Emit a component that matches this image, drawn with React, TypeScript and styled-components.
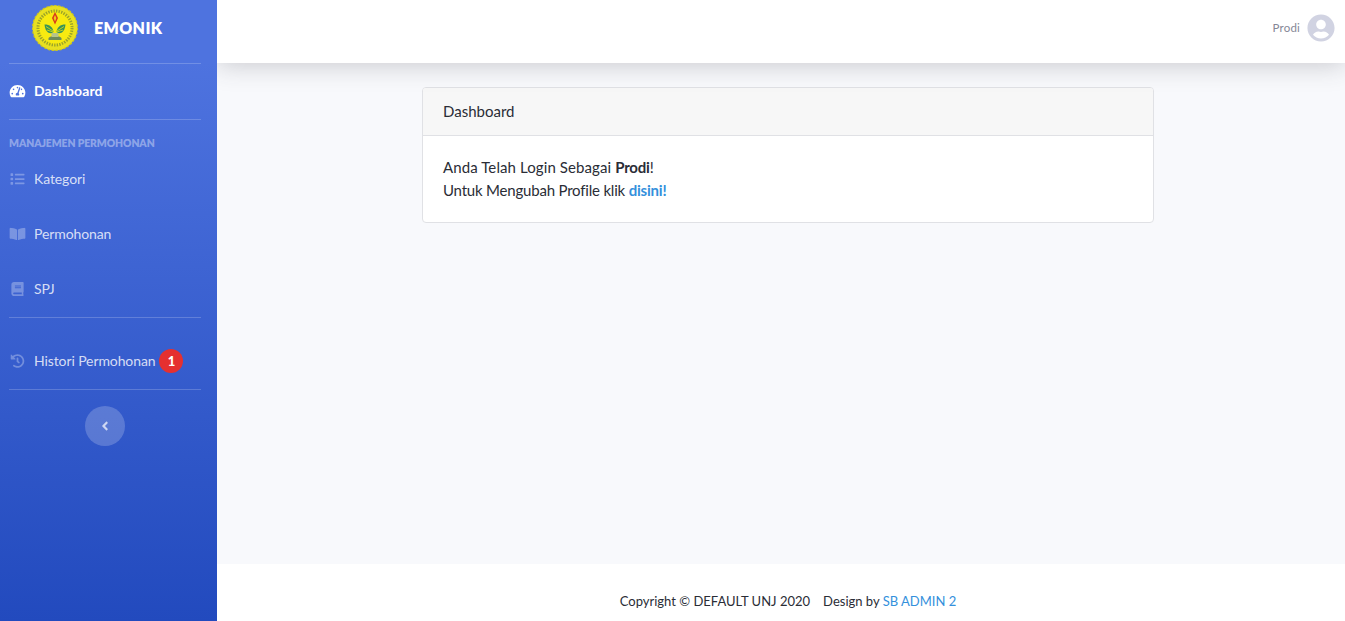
import React from "react";
import styled, { createGlobalStyle } from "styled-components";
import { FaTachometerAlt, FaList, FaBookOpen, FaBook, FaHistory, FaUserCircle, FaAngleLeft } from "react-icons/fa";

const Global = createGlobalStyle`
  html, body { margin: 0; padding: 0; height: 100%; overflow: hidden; }
  body { font-family: Lato, "Noto Sans", sans-serif; background: #f8f9fc; color: #212529; }
  * { box-sizing: border-box; }
`;

const Page = styled.div`
  display: flex;
  height: 621px;
  width: 1345px;
`;

const Sidebar = styled.aside`
  width: 217px;
  flex: none;
  padding: 0 16px 0 9px;
  background: linear-gradient(180deg, #4e73df 10%, #224abe 100%);
  display: flex;
  flex-direction: column;
  position: relative;
  z-index: 2;
`;

const Brand = styled.div`
  height: 63px;
  display: flex;
  align-items: center;
  padding: 0 0 7px 23px;
  gap: 16px;
`;

const BrandName = styled.span`
  color: #fff;
  font-weight: 800;
  font-size: 16px;
  letter-spacing: 0.35px;
  margin-bottom: 2px;
`;

const Divider = styled.hr`
  border: 0;
  margin: 0;
  height: 1px;
  flex: none;
  background: rgba(255, 255, 255, 0.2);
`;

const Item = styled.div<{ $h: number; $active?: boolean; $top?: number }>`
  height: ${(p) => p.$h}px;
  padding: ${(p) => p.$top ?? 0}px 0 2px;
  display: flex;
  align-items: center;
  font-size: 14px;
  font-weight: ${(p) => (p.$active ? 700 : 400)};
  color: ${(p) => (p.$active ? "#fff" : "rgba(255,255,255,0.8)")};
  letter-spacing: ${(p) => (p.$active ? 0.1 : -0.1)}px;
  & > svg {
    width: 17px;
    height: 14px;
    margin-right: 8px;
    flex: none;
    color: ${(p) => (p.$active ? "#fff" : "rgba(255,255,255,0.3)")};
  }
`;

const Heading = styled.div`
  height: 32px;
  padding-top: 16px;
  line-height: 14px;
  font-size: 10.4px;
  font-weight: 800;
  letter-spacing: -0.1px;
  color: rgba(255, 255, 255, 0.4);
  text-transform: uppercase;
  white-space: nowrap;
`;

const Badge = styled.span`
  width: 24px;
  height: 24px;
  margin-left: 4px;
  border-radius: 50%;
  background: #e53030;
  color: #fff;
  font-size: 13px;
  font-weight: 900;
  display: flex;
  align-items: center;
  justify-content: center;
`;

const ToggleWrap = styled.div`
  display: flex;
  justify-content: center;
  padding-top: 16px;
`;

const Toggle = styled.button`
  width: 40px;
  height: 40px;
  border: 0;
  padding: 0;
  border-radius: 50%;
  background: rgba(255, 255, 255, 0.2);
  color: rgba(255, 255, 255, 0.7);
  display: flex;
  align-items: center;
  justify-content: center;
`;

const Main = styled.div`
  flex: 1;
  display: flex;
  flex-direction: column;
  min-width: 0;
`;

const Topbar = styled.header`
  height: 63px;
  flex: none;
  background: #fff;
  box-shadow: 0 2px 26px 0 rgba(58, 59, 69, 0.25);
  display: flex;
  align-items: center;
  justify-content: flex-end;
  padding: 0 10px 7px 0;
  gap: 7px;
  position: relative;
`;

const UserName = styled.span`
  font-size: 11.5px;
  color: #858796;
  letter-spacing: 0.2px;
  margin-bottom: 1px;
`;

const Content = styled.main`
  flex: 1;
  display: flex;
  justify-content: center;
  align-items: flex-start;
  padding: 24px 0 0 14px;
`;

const Card = styled.section`
  width: 732px;
  height: 136px;
  background: #fff;
  border: 1px solid #e0e1e5;
  border-radius: 4px;
  overflow: hidden;
`;

const CardHeader = styled.div`
  height: 48px;
  padding: 0 0 2px 20px;
  display: flex;
  align-items: center;
  background: #f7f7f7;
  border-bottom: 1px solid #e0e1e5;
  font-size: 15px;
  color: #2a2d36;
`;

const CardBody = styled.div`
  padding: 20px;
  font-size: 15px;
  line-height: 23px;
  color: #2a2d36;
  & b {
    font-weight: 700;
    letter-spacing: -0.2px;
  }
`;

const Line = styled.div<{ $spacing: number }>`
  letter-spacing: ${(p) => p.$spacing}px;
`;

const Accent = styled.a`
  color: #3490dc;
  font-weight: 700;
`;

const Footer = styled.footer`
  height: 57px;
  flex: none;
  background: #fff;
  display: flex;
  align-items: center;
  justify-content: center;
  padding: 16px 0 0 14px;
  font-size: 13px;
  color: #2a2d36;
  gap: 13px;
`;

const FooterLink = styled.a`
  color: #3490dc;
`;

const Logo = () => (
  <svg width="46" height="46" viewBox="0 0 46 46" style={{ flex: "none" }}>
    <circle cx="23" cy="23" r="22.4" fill="#e8e020" stroke="#cfc81a" strokeWidth="1.2" strokeDasharray="2.5 1.5" />
    <circle cx="23" cy="23" r="17" fill="#f7ea10" stroke="#9aa32a" strokeWidth="3" strokeDasharray="1.4 1.2" />
    <path d="M23 7l3 6-3 6.500-3-6.500z" fill="#d8381c" />
    <path d="M23 10l1.400 3-1.400 3.500-1.400-3.500z" fill="#f2c81a" />
    <path d="M21.500 27c-.8-5-3.500-7.500-9-7.500.3 3.500 1.500 6.500 3.500 8 2 1 4 1 5.500-.5z" fill="#3a9358" />
    <path d="M24.500 27c.8-5 3.500-7.500 9-7.500-.3 3.500-1.500 6.500-3.500 8-2 1-4 1-5.500-.5z" fill="#3a9358" />
    <path d="M14 21.500l7 4.500M15 25l6 2M32 21.500l-7 4.500M31 25l-6 2" stroke="#f7ea10" strokeWidth=".7" />
    <path d="M16.500 33c2-2 4.500-2 6.500-1 2-1 4.500-1 6.500 1v2h-13z" fill="#6e8a58" />
    <path d="M19.500 28h7v4h-7z" fill="#b5c48a" />
  </svg>
);

export default function App() {
  return (
    <Page>
      <Global />
      <Sidebar>
        <Brand>
          <Logo />
          <BrandName>EMONIK</BrandName>
        </Brand>
        <Divider />
        <Item $h={55} $active>
          <FaTachometerAlt />
          Dashboard
        </Item>
        <Divider />
        <Heading>Manajemen Permohonan</Heading>
        <Item $h={55}>
          <FaList />
          Kategori
        </Item>
        <Item $h={55}>
          <FaBookOpen />
          Permohonan
        </Item>
        <Item $h={55}>
          <FaBook />
          SPJ
        </Item>
        <Divider />
        <Item $h={71} $top={16}>
          <FaHistory />
          Histori Permohonan
          <Badge>1</Badge>
        </Item>
        <Divider />
        <ToggleWrap>
          <Toggle aria-label="Toggle sidebar">
            <FaAngleLeft size={14} />
          </Toggle>
        </ToggleWrap>
      </Sidebar>
      <Main>
        <Topbar>
          <UserName>Prodi</UserName>
          <FaUserCircle size={28} color="#d1d3e2" />
        </Topbar>
        <Content>
          <Card>
            <CardHeader>Dashboard</CardHeader>
            <CardBody>
              <Line $spacing={0.1}>
                Anda Telah Login Sebagai <b>Prodi</b>!
              </Line>
              <Line $spacing={-0.2}>
                Untuk Mengubah Profile klik <Accent>disini!</Accent>
              </Line>
            </CardBody>
          </Card>
        </Content>
        <Footer>
          <span>Copyright © DEFAULT UNJ 2020</span>
          <span>
            Design by <FooterLink>SB ADMIN 2</FooterLink>
          </span>
        </Footer>
      </Main>
    </Page>
  );
}
